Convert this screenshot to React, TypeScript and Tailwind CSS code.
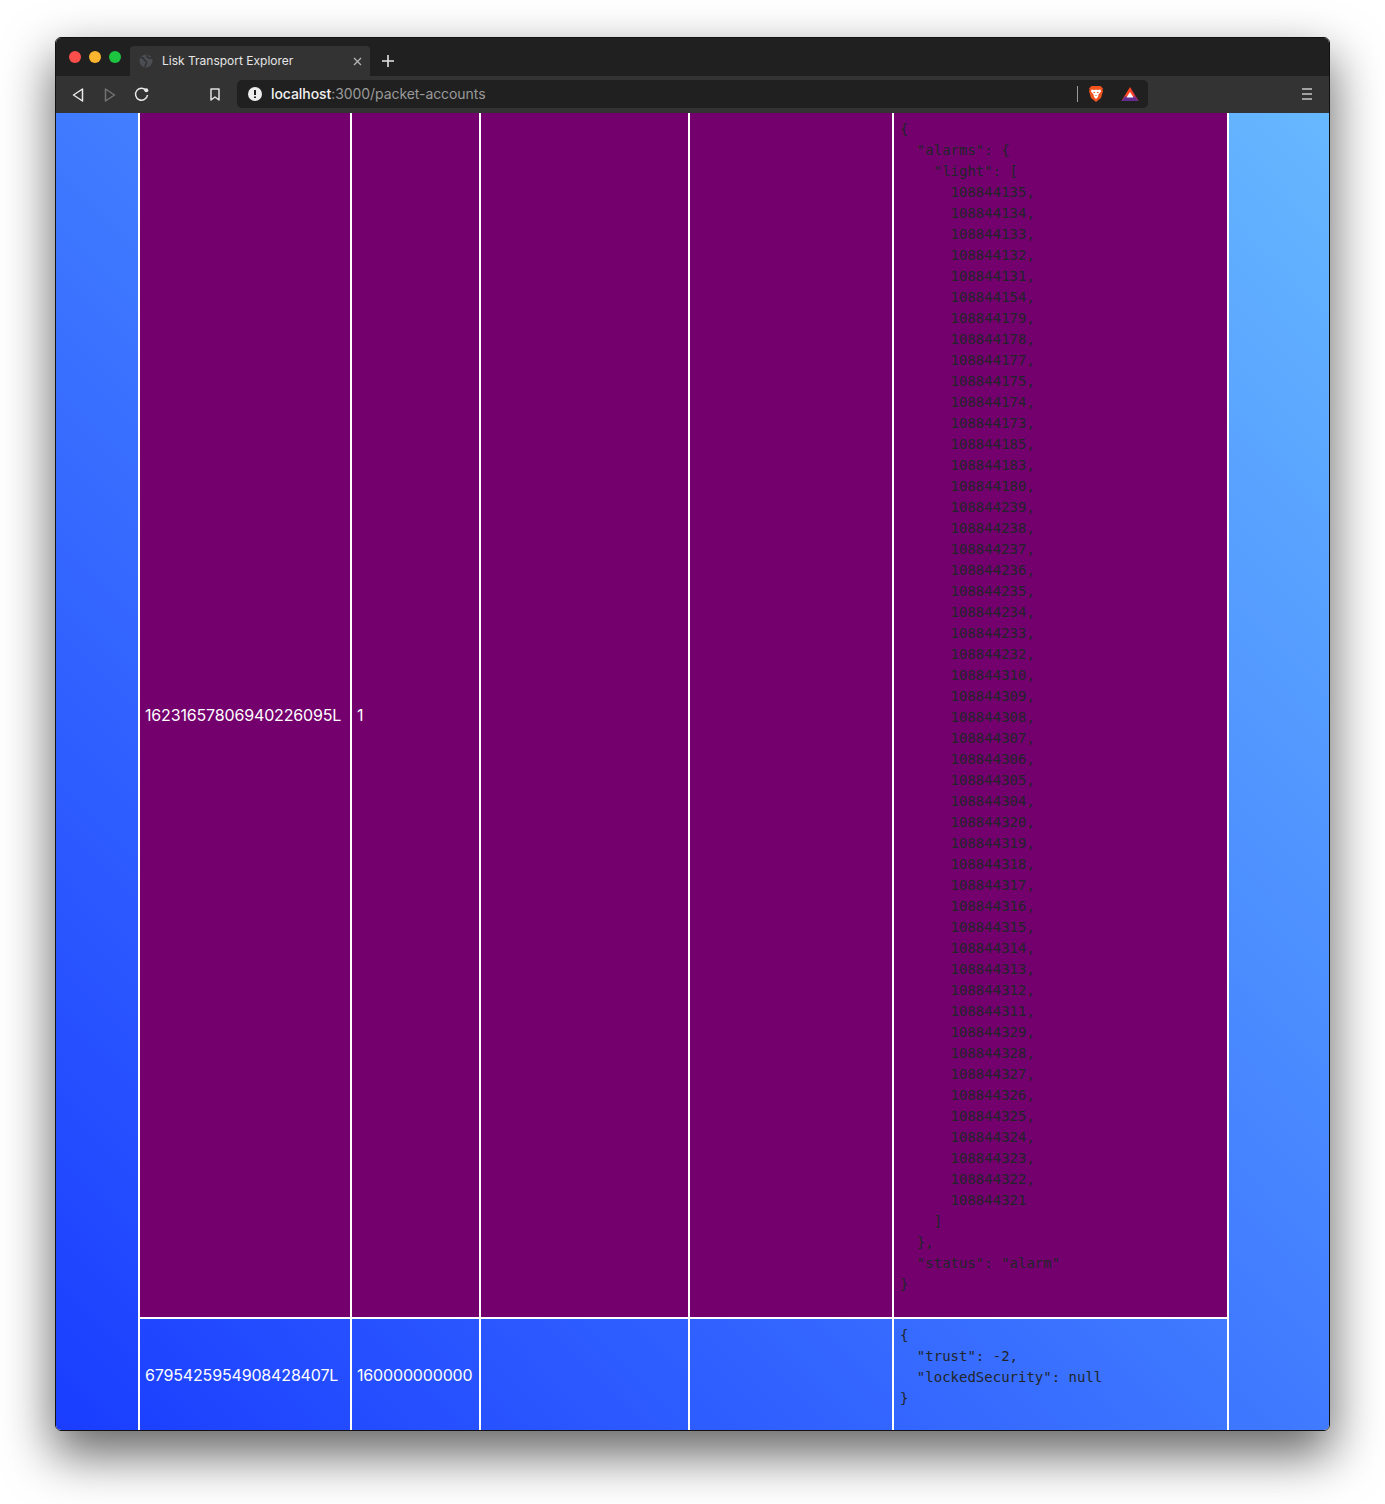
import React from 'react';

const lightAlarms = [
  108844135, 108844134, 108844133, 108844132, 108844131, 108844154, 108844179,
  108844178, 108844177, 108844175, 108844174, 108844173, 108844185, 108844183,
  108844180, 108844239, 108844238, 108844237, 108844236, 108844235, 108844234,
  108844233, 108844232, 108844310, 108844309, 108844308, 108844307, 108844306,
  108844305, 108844304, 108844320, 108844319, 108844318, 108844317, 108844316,
  108844315, 108844314, 108844313, 108844312, 108844311, 108844329, 108844328,
  108844327, 108844326, 108844325, 108844324, 108844323, 108844322, 108844321,
];

const rows = [
  {
    address: '16231657806940226095L',
    balance: '1',
    json: { alarms: { light: lightAlarms }, status: 'alarm' },
    rowClass: 'bg-[#74006e]',
  },
  {
    address: '6795425954908428407L',
    balance: '160000000000',
    json: { trust: -2, lockedSecurity: null },
    rowClass: '',
  },
];

const Cell: React.FC<{ children?: React.ReactNode; className?: string }> = ({ children, className = '' }) => (
  <td className={`border-2 border-t-0 border-white py-[6px] pr-[6px] align-middle ${className}`}>{children}</td>
);

const TabBar = () => (
  <div className="flex h-[38px] shrink-0 items-end bg-[#202020]">
    <div className="flex h-[38px] w-[74px] items-center gap-2 self-start pl-[13px]">
      <span className="h-3 w-3 rounded-full bg-[#fc4f4c]" />
      <span className="h-3 w-3 rounded-full bg-[#fdb42e]" />
      <span className="h-3 w-3 rounded-full bg-[#1dc43f]" />
    </div>
    <div className="flex h-[30px] w-[240px] items-center rounded-t-[4px] bg-[#333333] pl-[9px] pr-[8px]">
      <svg width="14" height="14" viewBox="0 0 14 14" className="shrink-0">
        <circle cx="7" cy="7" r="6.5" fill="#4b4d52" />
        <path d="M2 3.500c2 .3 3 1 3.200 2.200s1.800 1 2.300 2.200-.6 2.500-1.800 4.800M8 1c-.4 1.500.3 2.300 1.500 2.700s2.500.2 3.500 1" fill="none" stroke="#2f3033" strokeWidth="1.500" />
      </svg>
      <span className="ml-[9px] flex-1 whitespace-nowrap font-['Inter',sans-serif] text-[12px] text-[#e6e6e6]">
        Lisk Transport Explorer
      </span>
      <svg width="9" height="9" viewBox="0 0 9 9" className="shrink-0">
        <path d="M1 1l7 7M8 1L1 8" stroke="#b4b4b4" strokeWidth="1.300" />
      </svg>
    </div>
    <svg width="12" height="12" viewBox="0 0 12 12" className="mb-[9px] ml-[12px]">
      <path d="M6 0v12M0 6h12" stroke="#e4e4e4" strokeWidth="1.600" />
    </svg>
  </div>
);

const Toolbar = () => (
  <div className="flex h-[37px] shrink-0 items-start bg-[#333333]">
    <div className="flex h-[37px] w-[181px] items-center pl-[16px]">
      <svg width="12" height="14" viewBox="0 0 12 14">
        <path d="M10.500 1L1.500 7l9 6z" fill="none" stroke="#e8e8e8" strokeWidth="1.500" strokeLinejoin="round" />
      </svg>
      <svg width="12" height="14" viewBox="0 0 12 14" className="ml-[20px]">
        <path d="M1.500 1l9 6-9 6z" fill="none" stroke="#737373" strokeWidth="1.500" strokeLinejoin="round" />
      </svg>
      <svg width="15" height="15" viewBox="0 0 15 15" className="ml-[18px]">
        <path d="M12.500 3.800A6 6 0 1 0 13.500 8" fill="none" stroke="#e8e8e8" strokeWidth="1.500" />
        <circle cx="12.300" cy="3.300" r="2" fill="#e8e8e8" />
      </svg>
      <svg width="10" height="13" viewBox="0 0 10 13" className="ml-[61px]">
        <path d="M1 1h8v11L5 9l-4 3z" fill="none" stroke="#e0e0e0" strokeWidth="1.500" strokeLinejoin="round" />
      </svg>
    </div>
    <div className="mt-1 flex h-[28px] w-[911px] items-center rounded-[5px] bg-[#202020] pl-[11px] font-['Inter',sans-serif] text-[14px] tracking-[-0.07px]">
      <svg width="14" height="14" viewBox="0 0 14 14" className="shrink-0">
        <circle cx="7" cy="7" r="7" fill="#eeeeee" />
        <path d="M7 3v5M7 9.500v1.500" stroke="#202020" strokeWidth="2" />
      </svg>
      <span className="mb-[2px] ml-[9px] whitespace-nowrap font-medium text-[#f0f0f0]">localhost</span>
      <span className="mb-[2px] whitespace-nowrap text-[#9a9a9a]">:3000/packet-accounts</span>
      <span className="ml-auto h-[16px] w-px bg-[#9a9a9a]" />
      <svg width="16" height="18" viewBox="0 0 16 18" className="ml-[10px] shrink-0">
        <path d="M3.500 1h9L15 3.500l-.5 1 .5 1.500-2 7-5 4-5-4-2-7 .5-1.500-.5-1z" fill="#f1531f" />
        <path d="M3.500 4.500l3 .5L8 4.500 9.500 5l3-.5 .5 2-2.500 3-.5 2.500L8 14l-2-2-.5-2.500L3 6.500z" fill="#ffffff" />
        <path d="M5.500 7.500h1.500M9 7.500h1.500M7.500 10.500h1" stroke="#f1531f" strokeWidth="1" />
      </svg>
      <svg width="18" height="16" viewBox="0 0 18 16" className="ml-[17px] mr-[9px] shrink-0">
        <path d="M9 1l8.500 14H.500z" fill="#ff4724" />
        <path d="M.500 15L4 10.500h10l3.500 4.500z" fill="#662d91" />
        <path d="M9 1l8.500 14-3.500-4.500z" fill="#9e1f63" />
        <path d="M9 6l3.500 5.500h-7z" fill="#ffffff" />
      </svg>
    </div>
    <svg width="10" height="12" viewBox="0 0 10 12" className="ml-[154px] mt-[12px]">
      <path d="M0 1h10M0 6h10M0 11h10" stroke="#c8c8c8" strokeWidth="1.600" />
    </svg>
  </div>
);

const App: React.FC = () => (
  <div className="h-[1504px] overflow-hidden bg-white pl-[55px] pt-[37px]">
    <div className="flex h-[1394px] w-[1275px] flex-col overflow-hidden rounded-[6px] border border-[#111111] shadow-[0_22px_50px_2px_rgba(0,0,0,0.6)]">
      <TabBar />
      <Toolbar />
      <main className="flex-1 overflow-hidden bg-linear-to-tr/srgb from-[#1a3dff] to-[#66b8ff] pl-[82px]">
        <table className="w-[1091px] table-fixed border-collapse font-['Inter',sans-serif] text-[16px] leading-[24px] text-white">
          <colgroup>
            <col className="w-[212px]" />
            <col className="w-[129px]" />
            <col className="w-[209px]" />
            <col className="w-[204px]" />
            <col className="w-[335px]" />
          </colgroup>
          <tbody>
            {rows.map((row) => (
              <tr key={row.address} className={row.rowClass}>
                <Cell className="pl-[5px] tracking-[-0.16px]">{row.address}</Cell>
                <Cell className="pl-[5px] tracking-[-0.16px]">{row.balance}</Cell>
                <Cell className="pl-[6px]" />
                <Cell className="pl-[6px]" />
                <Cell className="pl-[6px]">
                  <pre className="mb-4 font-['DejaVu_Sans_Mono',monospace] text-[14px] leading-[21px] text-[#212529]">
                    {JSON.stringify(row.json, null, 2)}
                  </pre>
                </Cell>
              </tr>
            ))}
          </tbody>
        </table>
      </main>
    </div>
  </div>
);

export default App;
